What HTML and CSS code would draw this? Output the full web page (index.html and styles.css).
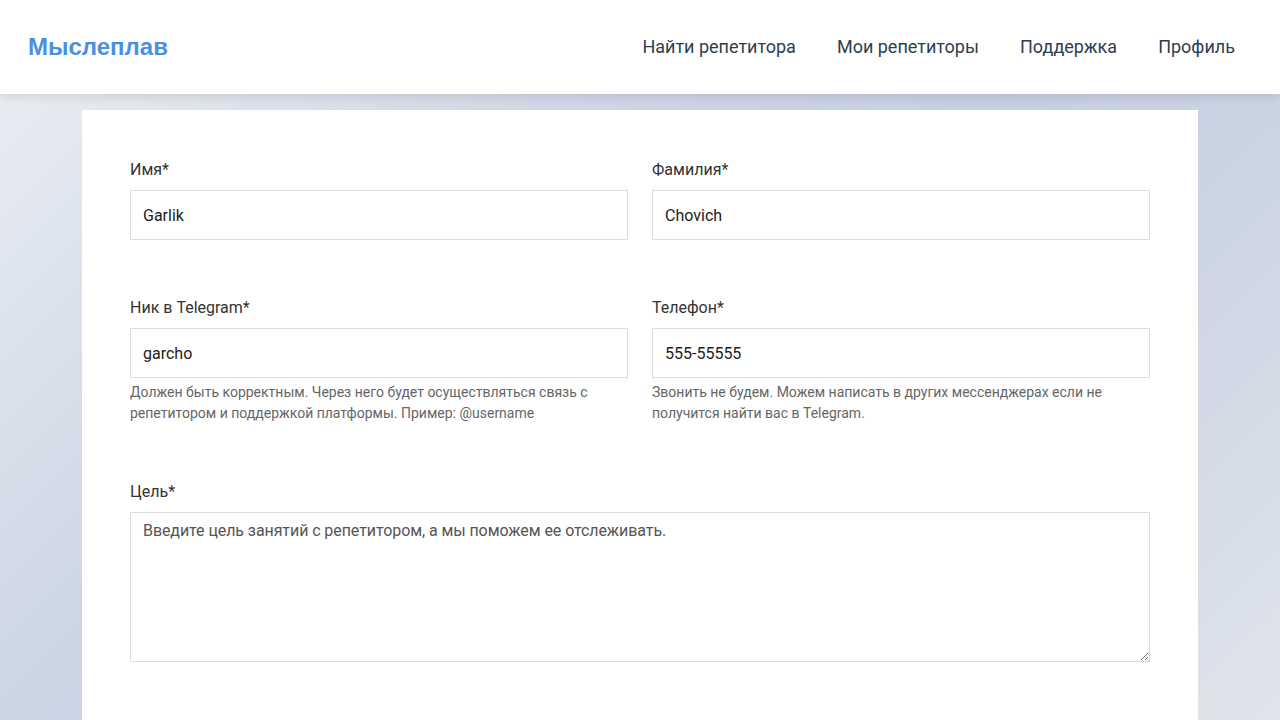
FILE: index.html
```html
<!DOCTYPE html>
<html lang="ru">
<head>
<meta charset="utf-8">
<title>Мыслеплав</title>
<link rel="stylesheet" href="styles.css">
</head>
<body>
<header class="header">
  <a class="logo" href="#">Мыслеплав</a>
  <nav class="nav">
    <a href="#">Найти репетитора</a>
    <a href="#">Мои репетиторы</a>
    <a href="#">Поддержка</a>
    <a href="#">Профиль</a>
  </nav>
</header>
<main class="card">
  <form class="form">
    <div class="row">
      <div class="field">
        <label class="label">Имя*</label>
        <input class="input" type="text" value="Garlik">
      </div>
      <div class="field">
        <label class="label">Фамилия*</label>
        <input class="input" type="text" value="Chovich">
      </div>
    </div>
    <div class="row">
      <div class="field">
        <label class="label">Ник в Telegram*</label>
        <input class="input" type="text" value="garcho">
        <p class="hint">Должен быть корректным. Через него будет осуществляться связь с репетитором и поддержкой платформы. Пример: @username</p>
      </div>
      <div class="field">
        <label class="label">Телефон*</label>
        <input class="input" type="text" value="555-55555">
        <p class="hint">Звонить не будем. Можем написать в других мессенджерах если не получится найти вас в Telegram.</p>
      </div>
    </div>
    <div class="row single">
      <div class="field">
        <label class="label">Цель*</label>
        <textarea class="textarea" placeholder="Введите цель занятий с репетитором, а мы поможем ее отслеживать."></textarea>
      </div>
    </div>
  </form>
</main>
</body>
</html>
```

FILE: styles.css
```css
* { box-sizing: border-box; }

html, body {
  margin: 0;
  padding: 0;
}

body {
  font-family: Roboto, "Noto Sans", sans-serif;
  color: #333;
  min-height: 720px;
  background: linear-gradient(135deg, #eceff5 0%, #cdd6e5 35%, #c4cfe0 55%, #cbd4e3 70%, #e0e4ec 100%) fixed;
}

.header {
  height: 94px;
  background: #fff;
  display: flex;
  align-items: center;
  justify-content: space-between;
  padding: 0 45px 0 28px;
  box-shadow: 0 2px 10px rgba(0, 0, 0, 0.12);
  position: relative;
  z-index: 1;
}

.logo {
  font-family: "Liberation Sans", Arial, sans-serif;
  font-weight: bold;
  font-size: 24px;
  color: #4a90e2;
  text-decoration: none;
}

.nav {
  display: flex;
  gap: 41px;
  margin-top: -2px;
}

.nav a {
  font-size: 18px;
  color: #2c3e50;
  text-decoration: none;
}

.card {
  display: block;
  width: 1116px;
  margin: 16px auto 0;
  background: #fff;
  padding: 48px 48px 60px;
}

.form {
  display: flex;
  flex-direction: column;
  gap: 56px;
}

.row {
  display: grid;
  grid-template-columns: 1fr 1fr;
  gap: 24px;
}

.row.single {
  grid-template-columns: 1fr;
}

.field {
  display: flex;
  flex-direction: column;
}

.label {
  font-size: 16px;
  line-height: 24px;
  color: #333;
  margin-bottom: 8px;
}

.input,
.textarea {
  font-family: Roboto, "Noto Sans", sans-serif;
  font-size: 16px;
  color: #222;
  border: 1px solid #ddd;
  border-radius: 0;
  background: #fff;
  outline: none;
  padding: 0 12px;
}

.input {
  height: 50px;
}

.textarea {
  height: 150px;
  padding: 8px 12px;
  line-height: 20px;
  letter-spacing: -0.08px;
  resize: vertical;
}

.textarea::placeholder {
  color: #555;
  opacity: 1;
}

.hint {
  margin: 4px 0 0;
  font-size: 14px;
  line-height: 21px;
  color: #666;
}
```
